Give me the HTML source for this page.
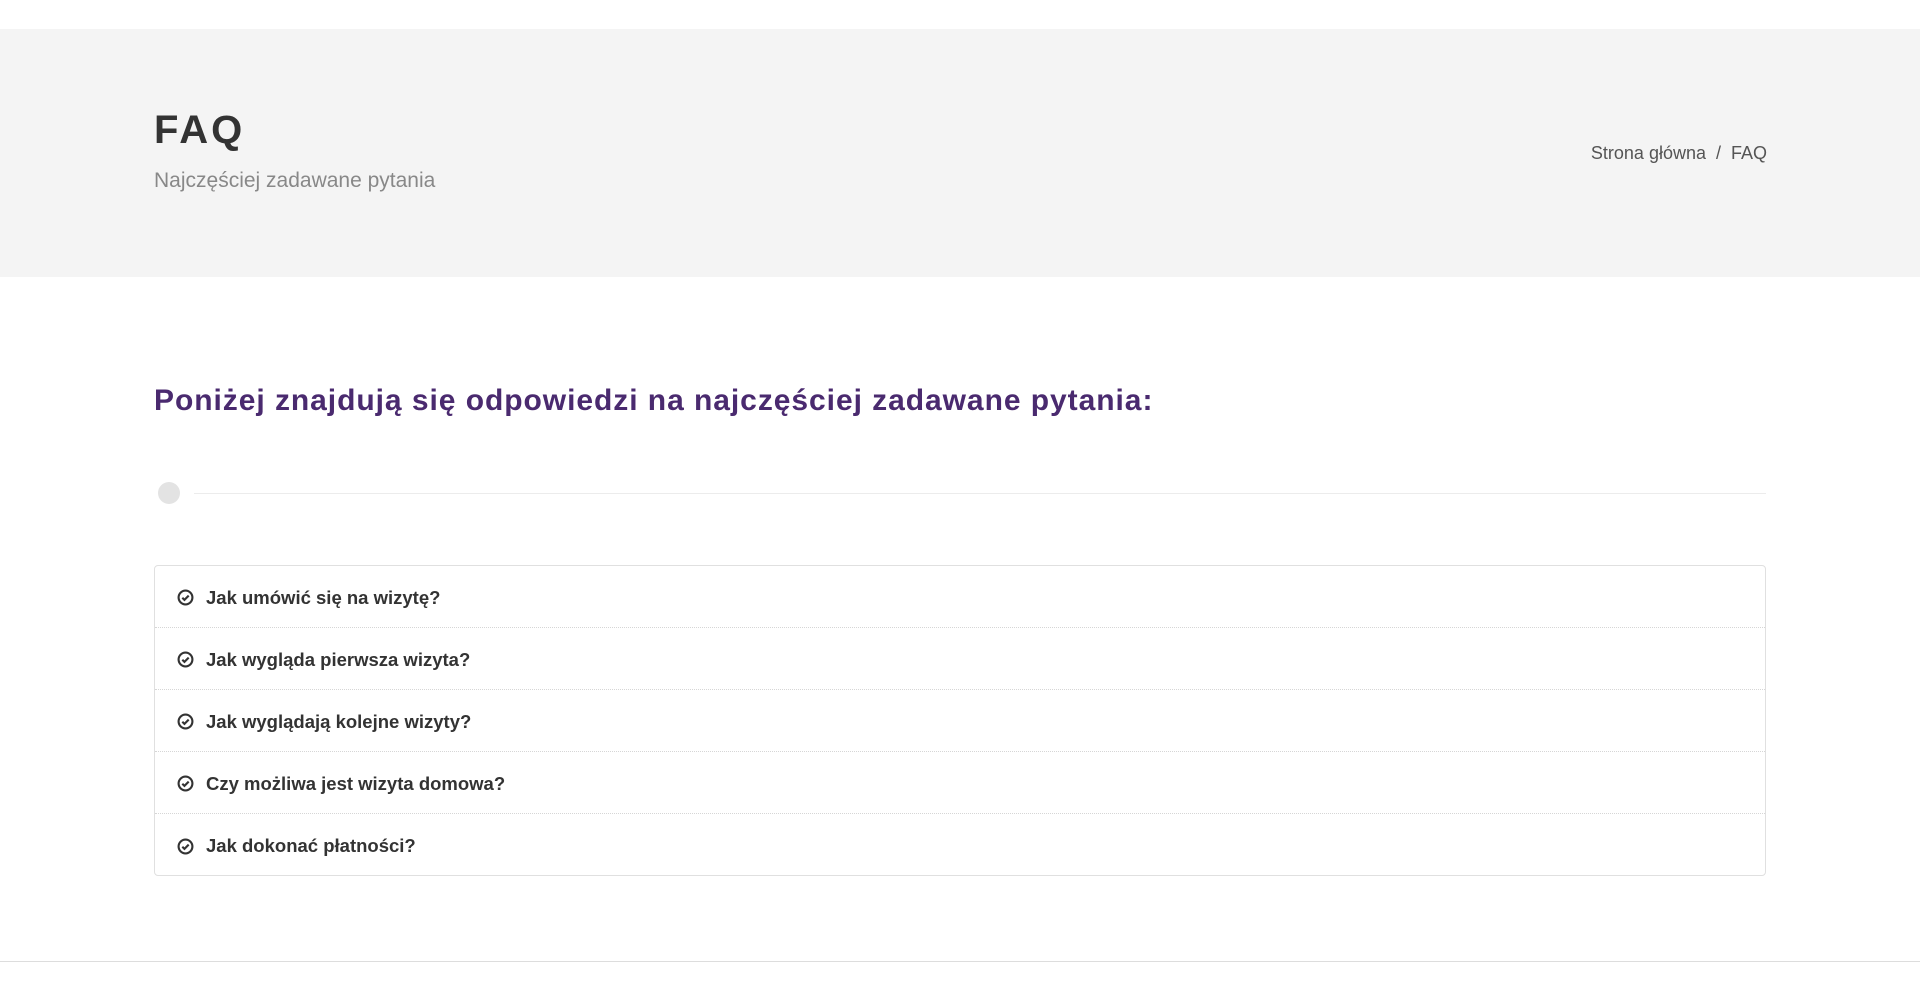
<!DOCTYPE html>
<html><head><meta charset="utf-8"><style>
*{margin:0;padding:0;box-sizing:border-box}
body{width:1920px;height:1000px;background:#fff;font-family:"Liberation Sans",sans-serif;position:relative;overflow:hidden}
.band{position:absolute;left:0;top:29px;width:1920px;height:248px;background:#f4f4f4}
.t{position:absolute;left:154px;top:108px;font-size:40px;font-weight:bold;letter-spacing:3px;color:#333}
.s{position:absolute;left:154px;top:169px;font-size:21px;color:#888;font-weight:300}
.bc{position:absolute;right:153px;top:143px;font-size:18px;color:#555}
.h{position:absolute;left:154px;top:384px;font-size:30px;font-weight:bold;color:#4a2a6f;letter-spacing:0.95px}
.dot{position:absolute;left:158px;top:482px;width:22px;height:22px;border-radius:50%;background:#e3e3e3}
.ln{position:absolute;left:194px;top:493px;width:1572px;height:1px;background:#ececec}
.box{position:absolute;left:154px;top:565px;width:1612px;height:311px;border:1px solid #e0e0e0;border-radius:4px}
.row{height:62px;border-bottom:1px dotted #d6d6d6;display:flex;align-items:center;padding-left:22px;font-size:18.5px;font-weight:bold;color:#333;padding-top:2px}
.row:last-child{border-bottom:none}
.row svg{margin-right:12px}
.foot{position:absolute;left:0;top:961px;width:1920px;height:1px;background:#ddd}
</style></head><body>
<div class="band"></div>
<div class="t">FAQ</div>
<div class="s">Najczęściej zadawane pytania</div>
<div class="bc">Strona główna &nbsp;/&nbsp; FAQ</div>
<div class="h">Poniżej znajdują się odpowiedzi na najczęściej zadawane pytania:</div>
<div class="dot"></div><div class="ln"></div>
<div class="box">
<div class="row"><svg width="17" height="17" viewBox="0 0 16 16"><circle cx="8" cy="8" r="6.5" fill="none" stroke="#333" stroke-width="2"/><path d="M5 8.2l2 2 4-4" fill="none" stroke="#333" stroke-width="2"/></svg>Jak umówić się na wizytę?</div>
<div class="row"><svg width="17" height="17" viewBox="0 0 16 16"><circle cx="8" cy="8" r="6.5" fill="none" stroke="#333" stroke-width="2"/><path d="M5 8.2l2 2 4-4" fill="none" stroke="#333" stroke-width="2"/></svg>Jak wygląda pierwsza wizyta?</div>
<div class="row"><svg width="17" height="17" viewBox="0 0 16 16"><circle cx="8" cy="8" r="6.5" fill="none" stroke="#333" stroke-width="2"/><path d="M5 8.2l2 2 4-4" fill="none" stroke="#333" stroke-width="2"/></svg>Jak wyglądają kolejne wizyty?</div>
<div class="row"><svg width="17" height="17" viewBox="0 0 16 16"><circle cx="8" cy="8" r="6.5" fill="none" stroke="#333" stroke-width="2"/><path d="M5 8.2l2 2 4-4" fill="none" stroke="#333" stroke-width="2"/></svg>Czy możliwa jest wizyta domowa?</div>
<div class="row"><svg width="17" height="17" viewBox="0 0 16 16"><circle cx="8" cy="8" r="6.5" fill="none" stroke="#333" stroke-width="2"/><path d="M5 8.2l2 2 4-4" fill="none" stroke="#333" stroke-width="2"/></svg>Jak dokonać płatności?</div>
</div>
<div class="foot"></div>
</body></html>
